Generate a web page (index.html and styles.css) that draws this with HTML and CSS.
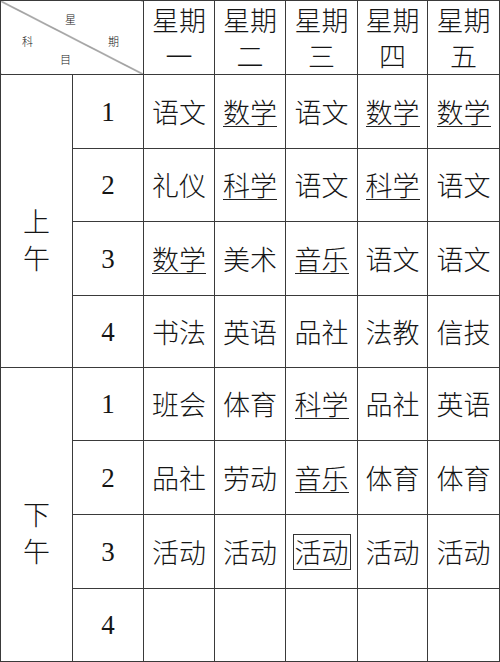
FILE: index.html
```html
<!DOCTYPE html>
<html lang="zh">
<head>
<meta charset="utf-8">
<title>课程表</title>
<link rel="stylesheet" href="styles.css">
</head>
<body>
<table class="schedule">
  <colgroup>
    <col class="c72"><col class="c71"><col class="c71"><col class="c71"><col class="c72"><col class="c70"><col class="c72">
  </colgroup>
  <tr class="r74">
    <th colspan="2" class="corner">
      <span class="lbl l-xing">星</span>
      <span class="lbl l-qi">期</span>
      <span class="lbl l-ke">科</span>
      <span class="lbl l-mu">目</span>
    </th>
    <th class="day">星期<br>一</th>
    <th class="day">星期<br>二</th>
    <th class="day">星期<br>三</th>
    <th class="day">星期<br>四</th>
    <th class="day">星期<br>五</th>
  </tr>
  <tr class="r74">
    <td rowspan="4" class="half">上<br>午</td>
    <td class="num">1</td>
    <td>语文</td><td><span class="ul">数学</span></td><td>语文</td><td><span class="ul">数学</span></td><td><span class="ul">数学</span></td>
  </tr>
  <tr class="r73">
    <td class="num">2</td>
    <td>礼仪</td><td><span class="ul">科学</span></td><td>语文</td><td><span class="ul">科学</span></td><td>语文</td>
  </tr>
  <tr class="r74">
    <td class="num">3</td>
    <td><span class="ul">数学</span></td><td>美术</td><td><span class="ul">音乐</span></td><td>语文</td><td>语文</td>
  </tr>
  <tr class="r72">
    <td class="num">4</td>
    <td>书法</td><td>英语</td><td>品社</td><td>法教</td><td>信技</td>
  </tr>
  <tr class="r73">
    <td rowspan="4" class="half">下<br>午</td>
    <td class="num">1</td>
    <td>班会</td><td>体育</td><td><span class="ul">科学</span></td><td>品社</td><td>英语</td>
  </tr>
  <tr class="r74">
    <td class="num">2</td>
    <td>品社</td><td>劳动</td><td><span class="ul">音乐</span></td><td>体育</td><td>体育</td>
  </tr>
  <tr class="r74">
    <td class="num">3</td>
    <td>活动</td><td>活动</td><td><span class="box">活动</span></td><td>活动</td><td>活动</td>
  </tr>
  <tr class="r73">
    <td class="num">4</td>
    <td></td><td></td><td></td><td></td><td></td>
  </tr>
</table>
</body>
</html>
```
FILE: styles.css
```css
html, body {
  margin: 0;
  padding: 0;
  background: #fff;
}
.schedule {
  border-collapse: collapse;
  table-layout: fixed;
  width: 499px;
  margin: 0;
  font-family: "Noto Sans CJK SC", "Noto Sans CJK JP", sans-serif;
  font-weight: 300;
  color: #151515;
}
.c72 { width: 72px; }
.c71 { width: 71px; }
.c70 { width: 70px; }
.r74 { height: 74px; }
.r73 { height: 73px; }
.r72 { height: 72px; }
.schedule th,
.schedule td {
  border: 1.4px solid #3a3a3a;
  padding: 0;
  text-align: center;
  vertical-align: middle;
  font-size: 27px;
  font-weight: 300;
  line-height: 36px;
  white-space: nowrap;
  overflow: hidden;
}
.day {
  line-height: 35px;
}
.corner {
  position: relative;
  background: linear-gradient(to top right, transparent calc(50% - 0.8px), #3a3a3a 50%, transparent calc(50% + 0.8px));
}
.lbl {
  position: absolute;
  font-size: 11px;
  line-height: 12px;
}
.l-xing { left: 64px; top: 12px; }
.l-qi { left: 107px; top: 34px; }
.l-ke { left: 21px; top: 34px; }
.l-mu { left: 59px; top: 52px; }
.num {
  font-family: "Liberation Serif", serif;
  font-weight: 400;
  font-size: 28px;
}
.schedule td.half {
  line-height: 37px;
  vertical-align: top;
  padding-top: 127px;
}
.ul {
  display: inline-block;
  line-height: 28px;
  border-bottom: 1.3px solid #222;
  padding-bottom: 0;
}
.box {
  display: inline-block;
  line-height: 32px;
  border: 1.3px solid #333;
  padding: 1px 1px;
}
```
